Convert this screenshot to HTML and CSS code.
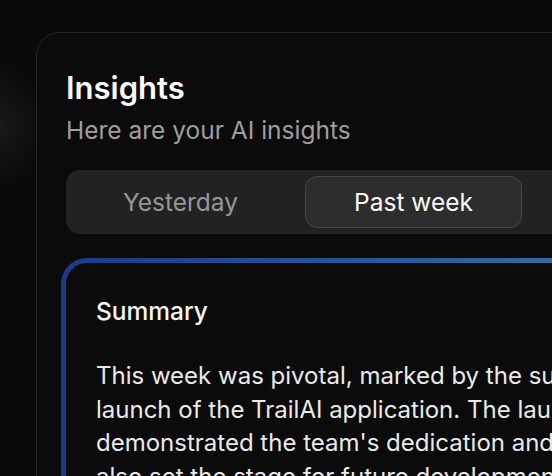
FILE: index.html
```html
<!DOCTYPE html>
<html>
  <head>
    <meta charset="utf-8" />
    <title>Insights</title>
    <link rel="stylesheet" href="styles.css">
  </head>
  <body>
    <div class="glow"></div>
    <div class="panel">
      <h1 class="title">Insights</h1>
      <p class="subtitle">Here are your AI insights</p>
      <div class="tabs">
        <button type="button" class="tab">Yesterday</button>
        <button type="button" class="tab active">Past week</button>
        <button type="button" class="tab">Past month</button>
      </div>
      <div class="summary">
        <h2 class="summary-title">Summary</h2>
        <p class="summary-text">
          This week was pivotal, marked by the successful<br>
          launch of the TrailAI application. The launch<br>
          demonstrated the team's dedication and hard work,<br>
          also set the stage for future developments.
        </p>
      </div>
    </div>
  </body>
</html>
```

FILE: styles.css
```css
html,
body {
  height: 100%;
}
body {
  margin: 0;
  padding: 32px 0 0 36px;
  background: #0a0a0a;
  overflow: hidden;
  font-family: "Inter", "Noto Sans", sans-serif;
  color: #f2f2f2;
  box-sizing: border-box;
  position: relative;
}
.glow {
  position: absolute;
  left: -60px;
  top: 60px;
  width: 110px;
  height: 130px;
  background: radial-gradient(ellipse at center, #1a1a1a 0%, rgba(20, 20, 20, 0) 70%);
}
.panel {
  position: relative;
  width: 820px;
  min-height: 600px;
  border: 1px solid #262626;
  border-radius: 24px;
  background: #0b0b0b;
  padding: 35px 29px;
}
.title {
  margin: 0;
  font-size: 31px;
  font-weight: 600;
  line-height: 40px;
  color: #fafafa;
}
.subtitle {
  margin: 7px 0 0;
  font-size: 24.5px;
  line-height: 30px;
  color: #9e9e9e;
}
.tabs {
  display: flex;
  gap: 16px;
  margin-top: 25px;
  padding: 6px;
  background: #222;
  border-radius: 14px;
}
.tab {
  width: 217px;
  height: 52px;
  flex: none;
  border: 1px solid transparent;
  border-radius: 12px;
  background: none;
  font-family: inherit;
  font-size: 24.5px;
  color: #979797;
}
.tab.active {
  background: #2d2d2d;
  border-color: #474747;
  color: #fafafa;
}
.summary {
  margin: 24px 0 0 -5px;
  border: 5px solid transparent;
  border-radius: 26px;
  background: linear-gradient(#0b0b0b, #0b0b0b) padding-box,
    linear-gradient(90deg, #1c3a86 0%, #2a5a98 40%, #3f8ab0 100%) border-box;
  padding: 33px 30px;
}
.summary-title {
  margin: 0;
  font-size: 24.5px;
  font-weight: 500;
  line-height: 30px;
  color: #f5f5f5;
}
.summary-text {
  margin: 33px 0 0;
  font-size: 24px;
  line-height: 33.5px;
  color: #eaeaea;
}
```
